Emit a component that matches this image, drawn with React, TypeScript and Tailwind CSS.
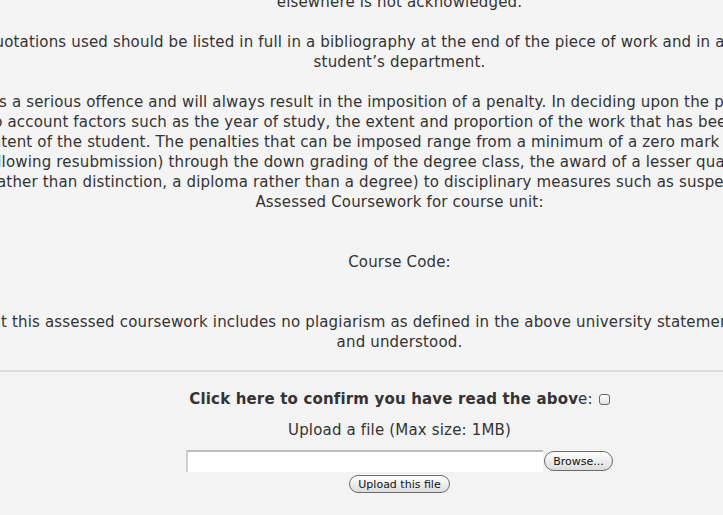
const bibliography = [
  "and all quotations used should be listed in full in a bibliography at the end of the piece of work and in accordance with the",
  "student’s department.",
];

const penalty = [
  "Plagiarism is a serious offence and will always result in the imposition of a penalty. In deciding upon the penalty, the University",
  "will take into account factors such as the year of study, the extent and proportion of the work that has been plagiarised, and the",
  "apparent intent of the student. The penalties that can be imposed range from a minimum of a zero mark for the work (without",
  "allowing resubmission) through the down grading of the degree class, the award of a lesser qualification or",
  "a merit rather than distinction, a diploma rather than a degree) to disciplinary measures such as suspension or expulsion.",
  "Assessed Coursework for course unit:",
];

const declaration = [
  "I agree that this assessed coursework includes no plagiarism as defined in the above university statement, which I have read",
  "and understood.",
];

function Lines({ lines }: { lines: string[] }) {
  return (
    <div className="flex flex-col items-center">
      {lines.map((line) => (
        <p key={line} className="whitespace-nowrap">
          {line}
        </p>
      ))}
    </div>
  );
}

export default function App() {
  return (
    <div className="h-[515px] w-full overflow-hidden bg-[#f4f4f4] font-['DejaVu_Sans',sans-serif] text-[15px] leading-5 tracking-[0.17px] text-[#333]">
      <div className="-mt-2 flex flex-col items-center pl-[76px]">
        <p className="whitespace-nowrap">elsewhere is not acknowledged.</p>
        <div className="mt-5">
          <Lines lines={bibliography} />
        </div>
        <div className="mt-5">
          <Lines lines={penalty} />
        </div>
        <p className="mt-10 whitespace-nowrap">Course Code:</p>
        <div className="mt-10">
          <Lines lines={declaration} />
        </div>
      </div>

      <div className="mt-[18px] h-0.5 w-full bg-[#dcdcdc]" />

      <div className="flex flex-col items-center bg-[#f3f3f3] pl-[76px] pt-[17px]">
        <div className="flex items-center">
          <span className="font-bold">Click here to confirm you have read the abov</span>
          <span>e:</span>
          <input
            type="checkbox"
            className="ml-1.5 h-[11px] w-[11px] appearance-none rounded-[3px] border border-[#666] bg-gradient-to-b from-white to-[#e2e2e2]"
          />
        </div>
        <p className="mt-[11px]">Upload a file (Max size: 1MB)</p>
        <div className="mt-2.5 flex items-center">
          <div className="h-[22px] w-[357px] border-t-2 border-l-2 border-t-[#bdbdbd] border-l-[#d0d0d0] bg-white" />
          <button className="ml-px h-5 rounded-full border border-[#6b6b6b] bg-gradient-to-b from-white to-[#dcdcdc] px-2 text-[11px] leading-none tracking-normal text-[#111]">
            Browse...
          </button>
        </div>
        <button className="mt-[3px] h-[18px] rounded-full border border-[#6b6b6b] bg-gradient-to-b from-white to-[#dcdcdc] px-2 text-[11px] leading-none tracking-normal text-[#111]">
          Upload this file
        </button>
      </div>
    </div>
  );
}
